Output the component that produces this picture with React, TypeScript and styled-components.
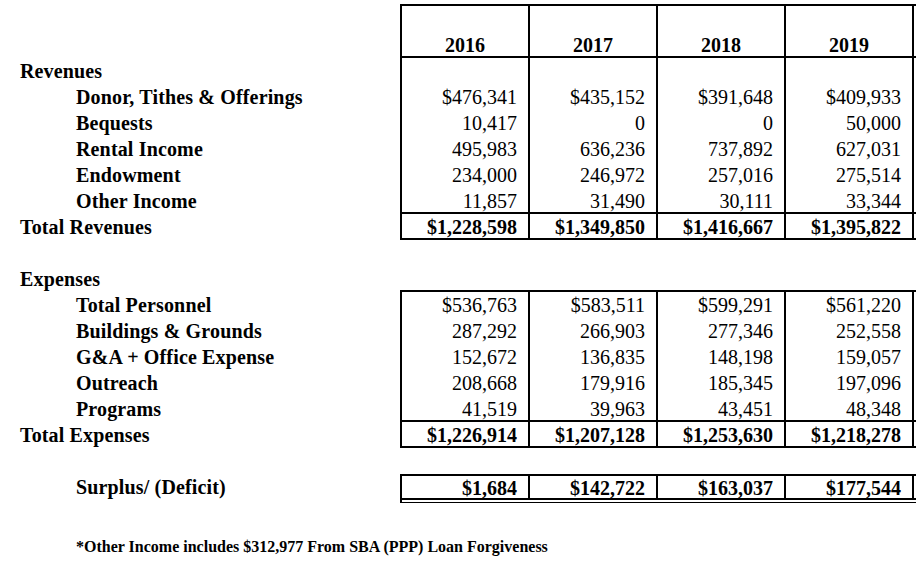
import React from "react";
import styled, { createGlobalStyle } from "styled-components";

const Global = createGlobalStyle`
  html, body { margin: 0; padding: 0; background: #fff; overflow: hidden; }
  body { font-family: "Liberation Serif", "Times New Roman", serif; color: #000; }
`;

const Sheet = styled.div`
  width: max-content;
  padding: 4px 0 0 20px;
  display: flex;
  flex-direction: column;
`;

const Row = styled.div<{ $h?: number }>`
  display: flex;
  height: ${(p) => p.$h ?? 26}px;
`;

const Label = styled.div<{ $indent?: boolean }>`
  width: 380px;
  flex: none;
  box-sizing: border-box;
  padding-left: ${(p) => (p.$indent ? 56 : 0)}px;
  font-size: 20px;
  font-weight: 700;
  line-height: 26px;
  letter-spacing: 0.15px;
  white-space: nowrap;
`;

type CellProps = {
  $box?: boolean;
  $top?: boolean;
  $bottom?: boolean;
  $bold?: boolean;
  $head?: boolean;
};

const Cell = styled.div<CellProps>`
  width: 128px;
  flex: none;
  box-sizing: border-box;
  height: 100%;
  padding: 0 ${(p) => (p.$head ? 0 : 11)}px 0 0;
  border-left: ${(p) => (p.$box ? "2px solid #000" : "none")};
  border-top: ${(p) => (p.$top ? "2px solid #000" : "none")};
  border-bottom: ${(p) => (p.$bottom ? "2px solid #000" : "none")};
  font-size: 20px;
  line-height: ${(p) => (p.$top ? 24 : 26)}px;
  font-weight: ${(p) => (p.$bold || p.$head ? 700 : 400)};
  text-align: ${(p) => (p.$head ? "center" : "right")};
  white-space: nowrap;
`;

const RuleLine = styled.div`
  width: 640px;
  flex: none;
  box-sizing: border-box;
  height: 100%;
  border-left: 2px solid #000;
  border-bottom: 1px solid #000;
`;

const Footnote = styled.div`
  margin: 34px 0 0 56px;
  font-size: 16px;
  font-weight: 700;
  line-height: 20px;
  white-space: nowrap;
`;

const years = ["2016", "2017", "2018", "2019", ""];

type Line = { label: string; values: string[] };

const revenues: Line[] = [
  { label: "Donor, Tithes & Offerings", values: ["$476,341", "$435,152", "$391,648", "$409,933"] },
  { label: "Bequests", values: ["10,417", "0", "0", "50,000"] },
  { label: "Rental Income", values: ["495,983", "636,236", "737,892", "627,031"] },
  { label: "Endowment", values: ["234,000", "246,972", "257,016", "275,514"] },
  { label: "Other Income", values: ["11,857", "31,490", "30,111", "33,344"] },
];
const totalRevenues: Line = {
  label: "Total Revenues",
  values: ["$1,228,598", "$1,349,850", "$1,416,667", "$1,395,822"],
};

const expenses: Line[] = [
  { label: "Total Personnel", values: ["$536,763", "$583,511", "$599,291", "$561,220"] },
  { label: "Buildings & Grounds", values: ["287,292", "266,903", "277,346", "252,558"] },
  { label: "G&A + Office Expense", values: ["152,672", "136,835", "148,198", "159,057"] },
  { label: "Outreach", values: ["208,668", "179,916", "185,345", "197,096"] },
  { label: "Programs", values: ["41,519", "39,963", "43,451", "48,348"] },
];
const totalExpenses: Line = {
  label: "Total Expenses",
  values: ["$1,226,914", "$1,207,128", "$1,253,630", "$1,218,278"],
};
const surplus: Line = {
  label: "Surplus/ (Deficit)",
  values: ["$1,684", "$142,722", "$163,037", "$177,544"],
};

const cols = [0, 1, 2, 3, 4];

const BoxCells: React.FC<{ values?: string[]; bottom?: boolean; bold?: boolean; top?: boolean }> = ({
  values,
  bottom,
  bold,
  top,
}) => (
  <>
    {cols.map((i) => (
      <Cell key={i} $box $bottom={bottom} $bold={bold} $top={top}>
        {values?.[i] ?? ""}
      </Cell>
    ))}
  </>
);

const ItemRows: React.FC<{ items: Line[] }> = ({ items }) => (
  <>
    {items.map((it, idx) => (
      <Row key={it.label}>
        <Label $indent>{it.label}</Label>
        <BoxCells values={it.values} bottom={idx === items.length - 1} />
      </Row>
    ))}
  </>
);

export default function App() {
  return (
    <>
      <Global />
      <Sheet>
        <Row $h={28}>
          <Label />
          <BoxCells top />
        </Row>
        <Row>
          <Label />
          {cols.map((i) => (
            <Cell key={i} $box $bottom $head>
              {years[i]}
            </Cell>
          ))}
        </Row>
        <Row>
          <Label>Revenues</Label>
          <BoxCells />
        </Row>
        <ItemRows items={revenues} />
        <Row>
          <Label>{totalRevenues.label}</Label>
          <BoxCells values={totalRevenues.values} bottom bold />
        </Row>
        <Row />
        <Row>
          <Label>Expenses</Label>
          {cols.map((i) => (
            <Cell key={i} $bottom />
          ))}
        </Row>
        <ItemRows items={expenses} />
        <Row>
          <Label>{totalExpenses.label}</Label>
          <BoxCells values={totalExpenses.values} bottom bold />
        </Row>
        <Row />
        <Row>
          <Label $indent>{surplus.label}</Label>
          <BoxCells values={surplus.values} top bottom bold />
        </Row>
        <Row $h={3}>
          <Label />
          <RuleLine />
        </Row>
        <Footnote>*Other Income includes $312,977 From SBA (PPP) Loan Forgiveness</Footnote>
      </Sheet>
    </>
  );
}
